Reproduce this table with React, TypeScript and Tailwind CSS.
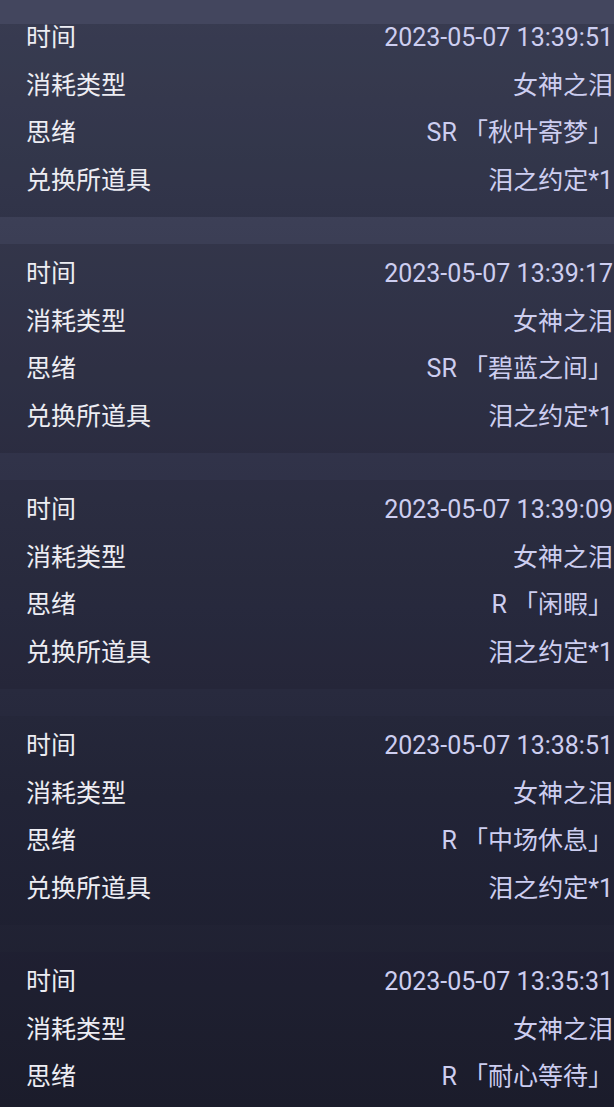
import React from 'react'

interface Record {
    time: string
    type: string
    thought: string
    item?: string
}

const records: Record[] = [
    { time: '2023-05-07 13:39:51', type: '女神之泪', thought: 'SR 「秋叶寄梦」', item: '泪之约定*1' },
    { time: '2023-05-07 13:39:17', type: '女神之泪', thought: 'SR 「碧蓝之间」', item: '泪之约定*1' },
    { time: '2023-05-07 13:39:09', type: '女神之泪', thought: 'R 「闲暇」', item: '泪之约定*1' },
    { time: '2023-05-07 13:38:51', type: '女神之泪', thought: 'R 「中场休息」', item: '泪之约定*1' },
    { time: '2023-05-07 13:35:31', type: '女神之泪', thought: 'R 「耐心等待」' },
]

// cards fade into the background further down the list
const cardShade = [
    'bg-[#0e0f1c]/[0.24]',
    'bg-[#0e0f1c]/[0.18]',
    'bg-[#0e0f1c]/[0.12]',
    'bg-[#0e0f1c]/[0.07]',
    'bg-[#0e0f1c]/[0.03]',
]

function Row({ label, value }: { label: string; value: string }) {
    return (
        <div className="flex h-[47.5px] items-center justify-between">
            <span className="text-[#ededf3]">{label}</span>
            <span className="text-[#cdcef0]">{value}</span>
        </div>
    )
}

export default function App() {
    return (
        <div
            className="relative h-[1107px] w-[614px] overflow-hidden bg-[linear-gradient(180deg,#474a62_0%,#3c3f56_20%,#2f3147_45%,#242639_72%,#1c1d2c_100%)] text-[25px] leading-none"
            style={{ fontFamily: 'Roboto, "Noto Sans CJK SC", sans-serif' }}
        >
            {/* header edge over the list */}
            <div className="absolute inset-x-0 top-0 z-10 h-[24px] bg-[#43465e]" />

            <div className="flex flex-col gap-[27px] pt-[8px]">
                {records.map((r, i) => (
                    <div key={r.time} className={`${cardShade[i]} pt-[6px] pr-[1px] pb-[13px] pl-[26px]`}>
                        <Row label="时间" value={r.time} />
                        <Row label="消耗类型" value={r.type} />
                        <Row label="思绪" value={r.thought} />
                        {r.item && <Row label="兑换所道具" value={r.item} />}
                    </div>
                ))}
            </div>
        </div>
    )
}
